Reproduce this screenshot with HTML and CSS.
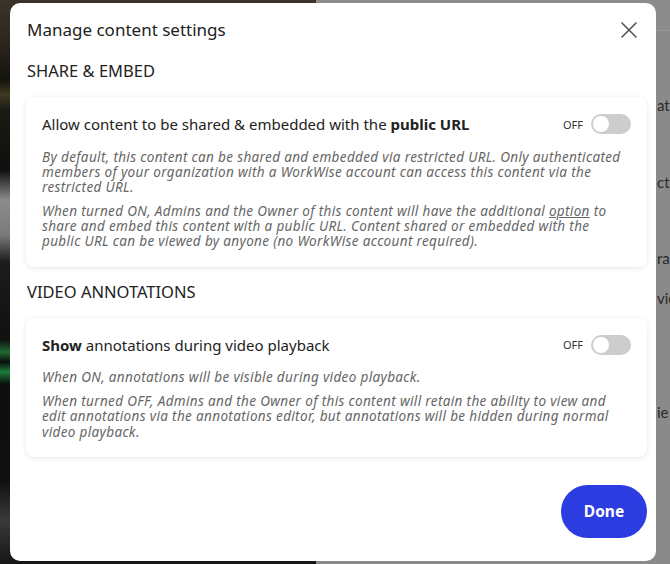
FILE: index.html
```html
<!DOCTYPE html>
<html lang="en">
<head>
    <meta charset="UTF-8">
    <meta name="viewport" content="width=device-width, initial-scale=1.0">
    <title>Manage content settings</title>
    <link rel="stylesheet" href="styles.css">
</head>
<body>
    <div class="page">
        <div class="player"></div>
        <aside class="side-panel">
            <div class="side-text">
                <p>ata</p>
                <p>ctor</p>
                <p>ransc</p>
                <p>view</p>
                <p>ie list</p>
            </div>
            <p class="bottom-line">1:05 &nbsp; Play the clip and start the review and</p>
        </aside>
    </div>

    <div class="modal">
        <div class="modal-header">
            <h1>Manage content settings</h1>
            <button class="close-btn" aria-label="Close">
                <svg width="16" height="16" viewBox="0 0 16 16"><path d="M1 1 L15 15 M15 1 L1 15" stroke="#555" stroke-width="1.6" stroke-linecap="round"/></svg>
            </button>
        </div>

        <h2>SHARE &amp; EMBED</h2>
        <div class="card">
            <div class="card-row">
                <span class="card-title">Allow content to be shared &amp; embedded with the <b>public URL</b></span>
                <div class="switch">
                    <span>OFF</span>
                    <span class="toggle"><span class="knob"></span></span>
                </div>
            </div>
            <p class="note first">By default, this content can be shared and embedded via restricted URL. Only authenticated members of your organization with a WorkWise account can access this content via the restricted URL.</p>
            <p class="note">When turned ON, Admins and the Owner of this content will have the additional <u>option</u> to share and embed this content with a public URL. Content shared or embedded with the public URL can be viewed by anyone (no WorkWise account required).</p>
        </div>

        <h2>VIDEO ANNOTATIONS</h2>
        <div class="card">
            <div class="card-row">
                <span class="card-title"><b>Show</b> annotations during video playback</span>
                <div class="switch">
                    <span>OFF</span>
                    <span class="toggle"><span class="knob"></span></span>
                </div>
            </div>
            <p class="note first">When ON, annotations will be visible during video playback.</p>
            <p class="note">When turned OFF, Admins and the Owner of this content will retain the ability to view and edit annotations via the annotations editor, but annotations will be hidden during normal video playback.</p>
        </div>

        <div class="modal-footer">
            <button class="done-btn">Done</button>
        </div>
    </div>
</body>
</html>
```

FILE: styles.css
```css
body {
    margin: 0;
    font-family: "Noto Sans", sans-serif;
    color: #222;
    overflow: hidden;
}

.page {
    display: flex;
    height: 564px;
    width: 670px;
}

.player {
    width: 316px;
    background: linear-gradient(to bottom,
        #3b3327 0px, #2d271e 40px, #1a1712 70px,
        #14130f 80px, #3e3a20 95px, #1b1a14 110px,
        #0f0f0d 170px, #8b8b8b 200px, #7a7a7a 235px,
        #1c1c1a 262px, #101210 340px, #1f6a33 352px,
        #0b0d0b 362px, #1b7d3c 372px, #0c0f0c 384px,
        #0e100e 480px, #3a3a3a 520px, #151515 564px);
}

.side-panel {
    flex: 1;
    display: flex;
    flex-direction: column;
    background-color: #8a8a8a;
    border-top: 30px solid #8c8c8c;
    box-shadow: inset 0 1px 0 #9a9a9a;
    font-family: Lato, sans-serif;
    font-size: 15px;
    color: #2a2a2a;
    overflow: hidden;
}

.side-text {
    padding: 66px 0 0 341px;
}

.side-text p {
    margin: 0 0 59px;
    white-space: nowrap;
}

.side-text p:nth-child(2) {
    margin-bottom: 58px;
}

.side-text p:nth-child(3) {
    margin-bottom: 22px;
}

.side-text p:nth-child(4) {
    margin-bottom: 96px;
}

.side-panel .bottom-line {
    margin: auto 0 -14px 48px;
    white-space: nowrap;
}

.modal {
    position: absolute;
    top: 3px;
    left: 10px;
    width: 646px;
    height: 558px;
    box-sizing: border-box;
    background-color: #fff;
    border-radius: 10px;
    padding: 15px 9px 0 16px;
    display: flex;
    flex-direction: column;
}

.modal-header {
    display: flex;
    justify-content: space-between;
    align-items: center;
    height: 24px;
    margin-bottom: 4px;
    padding-left: 1px;
}

h1 {
    margin: 0;
    font-size: 17px;
    font-weight: 400;
    line-height: 24px;
}

.close-btn {
    border: none;
    background: none;
    padding: 0;
    margin-right: 10px;
    display: flex;
    cursor: pointer;
}

h2 {
    margin: 15px 0 0 1px;
    font-size: 16.5px;
    font-weight: 400;
    line-height: 20px;
}

h2 + .card {
    margin-top: 16px;
}

.card {
    border-radius: 8px;
    box-shadow: 0 1px 5px rgba(0, 0, 0, 0.1);
    padding: 17px 16px 17px 16px;
}

.card-row {
    display: flex;
    justify-content: space-between;
    align-items: center;
    height: 20px;
}

.card-title {
    font-size: 15px;
}

.card-title b {
    font-weight: 700;
}

.switch {
    display: flex;
    align-items: center;
    gap: 8px;
    font-size: 11px;
    color: #333;
}

.toggle {
    width: 40px;
    height: 20px;
    border-radius: 10px;
    background-color: #cdcdcd;
    position: relative;
}

.knob {
    position: absolute;
    top: 2px;
    left: 2px;
    width: 16px;
    height: 16px;
    border-radius: 50%;
    background-color: #fff;
}

.note {
    margin: 8.5px 0 0;
    font-size: 13.5px;
    letter-spacing: 0.35px;
    line-height: 15.3px;
    font-style: italic;
    color: #666;
}

.note u {
    display: inline-block;
    line-height: 15.3px;
}

.note.first {
    margin-top: 15.5px;
}

.modal-footer {
    display: flex;
    justify-content: flex-end;
    margin-top: 28px;
}

.done-btn {
    width: 86px;
    height: 53px;
    border: none;
    border-radius: 27px;
    background-color: #2b3ce0;
    color: #fff;
    font-family: inherit;
    font-size: 15.5px;
    font-weight: 700;
    cursor: pointer;
}
```
